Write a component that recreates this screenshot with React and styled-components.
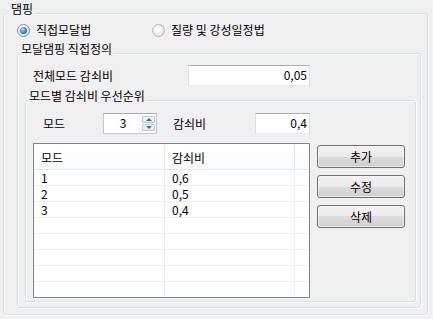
import React from 'react';
import styled, { createGlobalStyle } from 'styled-components';

const GlobalStyle = createGlobalStyle`
  html, body {
    margin: 0;
    padding: 0;
    background: #f0f0f0;
  }
  body {
    font-family: "Noto Sans CJK KR", "Noto Sans", sans-serif;
    font-size: 12px;
    color: #000;
  }
`;

const Page = styled.div`
  width: 433px;
  height: 319px;
  box-sizing: border-box;
  padding: 13px 0 0 3px;
  background: #f0f0f0;
`;

// Win7 풍 그룹박스: 회색 선 + 흰색 하이라이트
const Group = styled.div`
  box-sizing: border-box;
  width: ${p => p.$w}px;
  height: ${p => p.$h}px;
  margin: ${p => p.$m || '0'};
  border: 1px solid #d5dfe5;
  border-radius: 3px;
  box-shadow: 1px 1px 0 #fff, inset 1px 1px 0 #fff;
  display: flex;
  flex-direction: column;
`;

const Title = styled.div`
  align-self: flex-start;
  margin: -12px 0 0 ${p => p.$x}px;
  padding: 0 2px;
  line-height: 14px;
  background: #f0f0f0;
  white-space: nowrap;
`;

const RadioRow = styled.div`
  display: grid;
  grid-template-columns: 135px auto;
  margin-top: 7px;
  padding-left: 13px;
  height: 14px;
`;

const Option = styled.label`
  display: flex;
  align-items: center;
  gap: 6px;
  line-height: 14px;
  white-space: nowrap;
`;

const RadioMark = styled.span`
  width: 13px;
  height: 13px;
  box-sizing: border-box;
  border-radius: 50%;
  border: 1px solid ${p => (p.$on ? '#8a8d91' : '#b4b6b8')};
  background: radial-gradient(circle at 40% 35%, #ffffff 0%, #f2f2f2 40%, #d6d6d6 100%);
  display: flex;
  align-items: center;
  justify-content: center;

  &::after {
    content: '';
    display: ${p => (p.$on ? 'block' : 'none')};
    width: 7px;
    height: 7px;
    border-radius: 50%;
    background: radial-gradient(circle at 40% 35%, #bfe6fb 0%, #3c8fd6 45%, #1c4f95 100%);
  }
`;

const FieldRow = styled.div`
  display: flex;
  align-items: center;
  height: 21px;
  margin-top: ${p => p.$top}px;
  padding-left: ${p => p.$pad}px;
`;

const Label = styled.span`
  width: ${p => p.$w}px;
  margin-left: ${p => p.$ml || 0}px;
  line-height: 14px;
  white-space: nowrap;
`;

const TextBox = styled.div`
  box-sizing: border-box;
  width: ${p => p.$w}px;
  height: 21px;
  background: #fff;
  border: 1px solid #dbdfe6;
  border-top-color: #abadb3;
  border-bottom-color: #e3e9ef;
  text-align: right;
  padding-right: 2px;
  line-height: 18px;
`;

const Spin = styled.div`
  box-sizing: border-box;
  width: 54px;
  height: 21px;
  background: #fff;
  border: 1px solid #abadb3;
  border-color: #abadb3 #c4c6cb #c4c6cb #c4c6cb;
  display: flex;
`;

const SpinValue = styled.span`
  flex: 1;
  text-align: center;
  line-height: 18px;
`;

const SpinButtons = styled.div`
  width: 13px;
  margin: 2px 1px 2px 0;
  display: flex;
  flex-direction: column;
  gap: 1px;
`;

const SpinButton = styled.div`
  flex: 1;
  box-sizing: border-box;
  border: 1px solid #b8c6d6;
  border-radius: 1px;
  background: linear-gradient(#f6f9fc, #dfe7f0);
  display: flex;
  align-items: center;
  justify-content: center;

  &::after {
    content: '';
    width: 0;
    height: 0;
    border-left: 3px solid transparent;
    border-right: 3px solid transparent;
    ${p => (p.$down ? 'border-top' : 'border-bottom')}: 3px solid #3d6aa8;
  }
`;

const ListArea = styled.div`
  display: flex;
  align-items: flex-start;
  margin-top: 9px;
  padding-left: 7px;
`;

const ListView = styled.div`
  box-sizing: border-box;
  width: 277px;
  height: 155px;
  border: 1px solid #828790;
  background: #fff;
  overflow: hidden;
`;

const HeaderRow = styled.div`
  display: grid;
  grid-template-columns: 131px 130px 1fr;
  height: 25px;
  border-bottom: 1px solid #e5e5e5;
  background: linear-gradient(#ffffff, #fafbfc);
`;

const HeaderCell = styled.div`
  padding: 5px 0 0 7px;
  line-height: 18px;
  border-right: ${p => (p.$last ? 'none' : '1px solid #e5e5e5')};
`;

const Row = styled.div`
  display: grid;
  grid-template-columns: 131px 130px 1fr;
  height: 15px;
  border-bottom: 1px solid #f0f0f0;
`;

const Cell = styled.div`
  padding-left: 7px;
  line-height: 15px;
  border-right: ${p => (p.$last ? 'none' : '1px solid #f0f0f0')};
`;

const ButtonColumn = styled.div`
  display: flex;
  flex-direction: column;
  gap: 7px;
  margin: 2px 0 0 7px;
`;

const Button = styled.button`
  box-sizing: border-box;
  width: 88px;
  height: 23px;
  padding: 0;
  border: 1px solid #707070;
  border-radius: 3px;
  background: linear-gradient(#f2f2f2 0%, #ebebeb 50%, #dddddd 50%, #cfcfcf 100%);
  box-shadow: inset 0 0 0 1px rgba(255, 255, 255, 0.55);
  font-family: inherit;
  font-size: 12px;
  line-height: 14px;
  color: #000;
`;

const rows = [
  ['1', '0,6'],
  ['2', '0,5'],
  ['3', '0,4'],
  ['', ''],
  ['', ''],
  ['', ''],
  ['', ''],
  ['', ''],
];

export default function App() {
  return (
    <>
      <GlobalStyle />
      <Page>
        <Group $w={425} $h={302}>
          <Title $x={5}>댐핑</Title>
          <RadioRow>
            <Option><RadioMark $on />직접모달법</Option>
            <Option><RadioMark />질량 및 강성일정법</Option>
          </RadioRow>

          <Group $w={404} $h={255} $m="16px 0 0 13px">
            <Title $x={1}>모달댐핑 직접정의</Title>
            <FieldRow $top={9} $pad={15}>
              <Label $w={155}>전체모드 감쇠비</Label>
              <TextBox $w={122}>0,05</TextBox>
            </FieldRow>

            <Group $w={391} $h={202} $m="14px 0 0 7px">
              <Title $x={1}>모드별 감쇠비 우선순위</Title>
              <FieldRow $top={10} $pad={17}>
                <Label $w={60}>모드</Label>
                <Spin>
                  <SpinValue>3</SpinValue>
                  <SpinButtons>
                    <SpinButton />
                    <SpinButton $down />
                  </SpinButtons>
                </Spin>
                <Label $w={82} $ml={16}>감쇠비</Label>
                <TextBox $w={55}>0,4</TextBox>
              </FieldRow>

              <ListArea>
                <ListView>
                  <HeaderRow>
                    <HeaderCell>모드</HeaderCell>
                    <HeaderCell>감쇠비</HeaderCell>
                    <HeaderCell $last />
                  </HeaderRow>
                  {rows.map((r, i) => (
                    <Row key={i}>
                      <Cell>{r[0]}</Cell>
                      <Cell>{r[1]}</Cell>
                      <Cell $last />
                    </Row>
                  ))}
                </ListView>
                <ButtonColumn>
                  <Button>추가</Button>
                  <Button>수정</Button>
                  <Button>삭제</Button>
                </ButtonColumn>
              </ListArea>
            </Group>
          </Group>
        </Group>
      </Page>
    </>
  );
}
